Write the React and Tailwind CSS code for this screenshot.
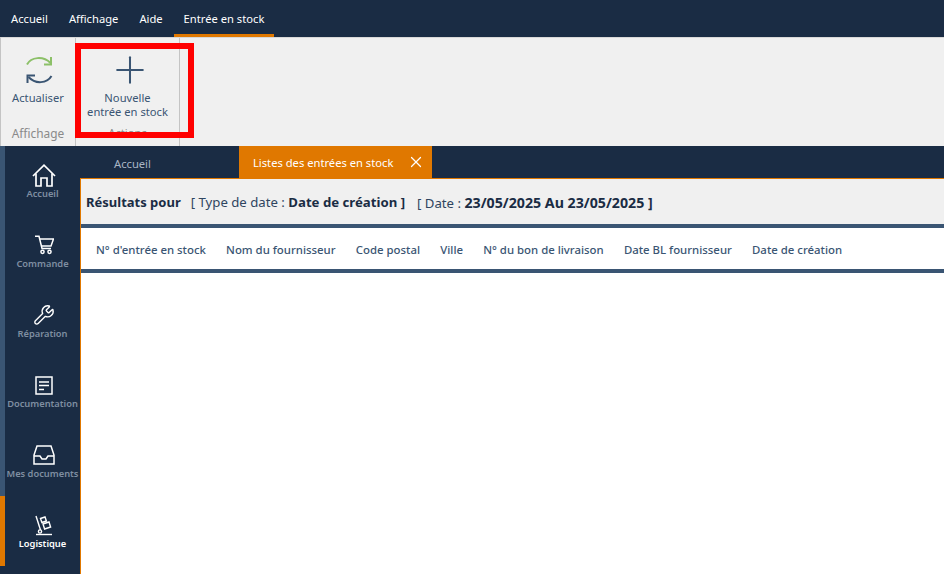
import React from 'react';
import { Plus, X, Wrench } from 'lucide-react';

const font = 'font-["Noto_Sans","Open_Sans",sans-serif]';

const HomeIcon = () => (
  <svg width="24" height="23" viewBox="0 0 24 23" fill="none" stroke="currentColor" strokeWidth="1.7">
    <path d="M1 12L12 1.2 23 12" />
    <path d="M4 9.5V22H9V14H15V22H20V9.5" />
  </svg>
);

const CartIcon = () => (
  <svg width="20" height="20" viewBox="0 0 20 20" fill="none" stroke="currentColor" strokeWidth="1.5">
    <path d="M1 1.2H5L8 13.5H17" />
    <path d="M5.5 4H19.5L17 11H7" />
    <circle cx="8.5" cy="16.8" r="1.6" />
    <circle cx="15.5" cy="16.8" r="1.6" />
  </svg>
);

const DocIcon = () => (
  <svg width="18" height="19" viewBox="0 0 18 19" fill="none" stroke="currentColor" strokeWidth="1.5">
    <rect x="1" y="1" width="16" height="17" />
    <path d="M4 6h10M4 9.5h10M4 13.5h5" />
  </svg>
);

const TrayIcon = () => (
  <svg width="22" height="20" viewBox="0 0 22 20" fill="none" stroke="currentColor" strokeWidth="1.5">
    <path d="M4 1H18L21 10V19H1V10Z" />
    <path d="M1 11H7L9 14H13L15 11H21" />
  </svg>
);

const TrolleyIcon = () => (
  <svg width="18" height="21" viewBox="0 0 18 21" fill="none" stroke="currentColor" strokeWidth="1.4">
    <path d="M1 1l4.5 14" />
    <path d="M1 19.5H17" />
    <circle cx="5" cy="16.5" r="1.6" />
    <path d="M5.5 3.5l4.5-1.5 1.4 4-4.5 1.5zM8 9l6-2 1.6 5-6 2z" />
  </svg>
);

const sideItems = [
  { label: 'Accueil', icon: <HomeIcon /> },
  { label: 'Commande', icon: <CartIcon /> },
  { label: 'Réparation', icon: <Wrench size={22} strokeWidth={1.5} /> },
  { label: 'Documentation', icon: <DocIcon /> },
  { label: 'Mes documents', icon: <TrayIcon /> },
  { label: 'Logistique', icon: <TrolleyIcon />, active: true },
];

const columns = [
  "N° d'entrée en stock",
  'Nom du fournisseur',
  'Code postal',
  'Ville',
  'N° du bon de livraison',
  'Date BL fournisseur',
  'Date de création',
];

const menus = ['Accueil', 'Affichage', 'Aide'];

const RefreshIcon = () => (
  <svg width="27" height="28" viewBox="0 0 27 28" fill="none" strokeWidth="2">
    <path d="M1 8.5C5 1 17 -0.5 24.5 7" stroke="#8cc068" />
    <path d="M25 1V8.5H18" stroke="#8cc068" />
    <path d="M25.5 20C21 27.5 9.5 28.5 2.5 21" stroke="#3a5573" />
    <path d="M1.5 27V19.5H9" stroke="#3a5573" />
  </svg>
);

export default function App() {
  return (
    <div className={`${font} relative w-[944px] h-[574px] overflow-hidden bg-white flex flex-col`}>
      {/* Menu */}
      <div className="h-[37px] bg-[#1a2c44] flex gap-[1px] pl-[1px] text-white text-[11.2px] shrink-0">
        {menus.map((m) => (
          <div key={m} className="px-[10px] pt-[11px]">{m}</div>
        ))}
        <div className="px-[10px] pt-[11px] border-b-[3px] border-[#e07800] whitespace-nowrap">Entrée en stock</div>
      </div>

      {/* Ruban */}
      <div className="h-[109px] bg-[#f0f0f0] flex shrink-0 border-l border-[#c4c4c4] text-[#3a5573] text-[11.2px] border-t border-t-[#d8d8d8]">
        <div className="w-[75px] border-r border-[#c4c4c4] flex flex-col items-center">
          <div className="mt-[18px] ml-[3px]"><RefreshIcon /></div>
          <div className="mt-[6px] leading-[16px]">Actualiser</div>
          <div className="mt-[19px] text-[#8a8a8a] text-[11.9px] leading-[16px]">Affichage</div>
        </div>
        <div className="w-[104px] border-r border-[#c4c4c4] flex flex-col items-center">
          <Plus size={44} strokeWidth={1.1} className="mt-[10px] ml-[5px]" />
          <div className="mt-[-1px] text-center leading-[14px]">Nouvelle<br />entrée en stock</div>
          <div className="mt-[6px] text-[#8a8a8a] leading-[16px]">Actions</div>
        </div>
      </div>

      {/* Cadre rouge */}
      <div className="absolute left-[75px] top-[43px] w-[119px] h-[95px] border-[6px] border-[#ff0000]" />

      <div className="flex-1 flex min-h-0 bg-[#1a2c44]">
        {/* Menu latéral */}
        <div className="w-[80px] shrink-0 flex">
          <div className="w-[5px] flex flex-col">
            <div className="h-[350px] bg-[#3a5573]" />
            <div className="h-[70px] bg-[#e07800]" />
          </div>
          <div className="w-[75px] flex flex-col">
            {sideItems.map((item) => (
              <div key={item.label} className="h-[70px] flex flex-col items-center pt-[17px] text-white">
                <div className="h-[24px] flex items-center justify-center ml-[3px]">{item.icon}</div>
                <div className={`text-[9.3px] leading-[14px] font-semibold whitespace-nowrap ${item.active ? 'text-white' : 'text-[#7f8ea1]'}`}>
                  {item.label}
                </div>
              </div>
            ))}
          </div>
        </div>

        {/* Contenu */}
        <div className="flex-1 min-w-0 flex flex-col">
          <div className="h-[32px] flex text-[11.2px] shrink-0">
            <div className="w-[159px] pl-[34px] pt-[10px] text-[#a9b5c4] leading-[16px]">Accueil</div>
            <div className="w-[193px] bg-[#e07800] text-white flex items-center pl-[14px] pt-[2px]">
              <span className="whitespace-nowrap">Listes des entrées en stock</span>
              <X size={18} strokeWidth={1.6} className="ml-[14px] mb-[2px]" />
            </div>
          </div>
          <div className="flex-1 bg-white border-l border-t border-[#e07800] flex flex-col">
            <div className="h-[45px] bg-[#f0f0f0] flex items-center pl-[5px] pt-[2px] text-[13px] text-[#1a2c44] whitespace-nowrap">
              <span className="font-bold">Résultats pour</span>
              <span className="ml-[10px] text-[13.2px] text-[#2f4560]">[ Type de date : <b className="text-[#1a2c44]">Date de création ]</b></span>
              <span className="ml-[12px] text-[13.2px] text-[#2f4560]">[ Date : <b className="text-[14.2px] text-[#1a2c44]">23/05/2025 Au 23/05/2025 ]</b></span>
            </div>
            <div className="h-[49px] border-y-4 border-[#3a5573] flex items-center pl-[15px] pt-[3px] gap-[20.2px] text-[11.4px] font-medium text-[#3a5573] whitespace-nowrap">
              {columns.map((c) => (
                <span key={c}>{c}</span>
              ))}
            </div>
          </div>
        </div>
      </div>
    </div>
  );
}
